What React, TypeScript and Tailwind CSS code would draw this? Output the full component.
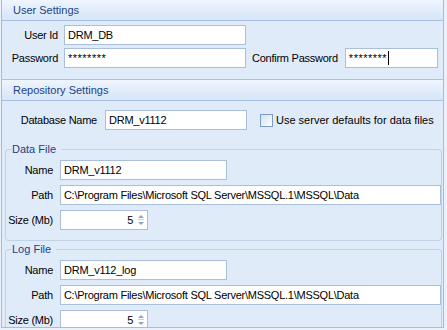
import React from "react";

const inputCls =
  "h-[20px] bg-white border border-[#a9bfdc] px-[3px] flex items-center text-[11px] text-black whitespace-nowrap overflow-hidden";

function Header({ title, top }: { title: string; top?: boolean }) {
  return (
    <div
      className={
        "h-[21px] bg-gradient-to-b from-[#eef5fe] to-[#d6e5f8] border-b border-[#aac2df] pl-[11px] flex items-center text-[11px] tracking-[0px] text-[#1d4185] " +
        (top ? "border-t border-t-[#aac2df] h-[22px]" : "")
      }
    >
      {title}
    </div>
  );
}

function Spin({ value }: { value: string }) {
  return (
    <div className={inputCls + " w-[88px] justify-end pr-[2px]"}>
      <span className="mr-[4px]">{value}</span>
      <svg width="8" height="16" viewBox="0 0 8 16">
        <path d="M1 6 L4 3 L7 6 Z" fill="#8ea5c4" />
        <rect x="1" y="7" width="6" height="1" fill="#c0cfe2" />
        <path d="M1 10 L4 13 L7 10 Z" fill="#8ea5c4" />
      </svg>
    </div>
  );
}

function Group({
  title,
  name,
  path,
  size,
  className,
}: {
  title: string;
  name: string;
  path: string;
  size: string;
  className?: string;
}) {
  return (
    <div className={"ml-[3px] mr-[1px] " + (className ?? "")}>
      <div className="flex h-[14px]">
        <div className="w-[6px] h-[7px] self-end border-t border-l border-[#c2d2e6] rounded-tl-[4px]" />
        <span className="px-[1px] text-[11px] tracking-[0px] leading-[14px] text-[#1d4185]">{title}</span>
        <div className="flex-1 h-[7px] self-end ml-[4px] border-t border-r border-[#c2d2e6] rounded-tr-[4px]" />
      </div>
      <div className="border-l border-r border-b border-[#c2d2e6] rounded-b-[4px] pt-[4px] pb-[10px] flex flex-col gap-[5px]">
        <div className="flex items-center">
          <span className="w-[47px] text-right">Name</span>
          <div className={inputCls + " ml-[7px] w-[167px]"}>{name}</div>
        </div>
        <div className="flex items-center">
          <span className="w-[47px] text-right">Path</span>
          <div className={inputCls + " ml-[7px] w-[382px]"}>{path}</div>
        </div>
        <div className="flex items-center">
          <span className="w-[47px] text-right whitespace-nowrap">Size (Mb)</span>
          <div className="ml-[7px]">
            <Spin value={size} />
          </div>
        </div>
      </div>
    </div>
  );
}

export default function App() {
  const path = "C:\\Program Files\\Microsoft SQL Server\\MSSQL.1\\MSSQL\\Data";
  return (
    <div className="w-[447px] h-[330px] bg-[#eaf1fa] overflow-hidden font-['Liberation_Sans',Arial,sans-serif] text-[11px] tracking-[-0.25px] text-black">
      <div className="ml-[1px] w-[443px] h-[328px] bg-[#e0ebfa] border-l border-r border-b border-[#a8bcd6] overflow-hidden">
        <Header title="User Settings" />
        <div className="h-[58px] pt-[4px] flex flex-col gap-[3px]">
          <div className="flex items-center">
            <span className="w-[56px] text-right">User Id</span>
            <div className={inputCls + " ml-[6px] w-[182px]"}>DRM_DB</div>
          </div>
          <div className="flex items-center">
            <span className="w-[56px] text-right">Password</span>
            <div className={inputCls + " ml-[6px] w-[182px] tracking-[0.5px]"}>********</div>
            <span className="ml-[6px] whitespace-nowrap">Confirm Password</span>
            <div className={inputCls + " ml-[7px] w-[93px] tracking-[0.5px]"}>
              ********
              <span className="inline-block w-px h-[14px] bg-black ml-[1px]" />
            </div>
          </div>
        </div>
        <Header title="Repository Settings" top />
        <div className="flex items-center mt-[9px] h-[20px]">
          <span className="w-[95px] text-right whitespace-nowrap">Database Name</span>
          <div className={inputCls + " ml-[8px] w-[142px]"}>DRM_v1112</div>
          <div className="ml-[13px] w-[13px] h-[13px] border border-[#7f9dc4] bg-gradient-to-br from-[#d3e0f1] to-[#ffffff]" />
          <span className="ml-[3px] whitespace-nowrap tracking-[0px]">Use server defaults for data files</span>
        </div>
        <Group title="Data File" name="DRM_v1112" path={path} size="5" className="mt-[12px]" />
        <Group title="Log File" name="DRM_v112_log" path={path} size="5" className="mt-[1px]" />
      </div>
    </div>
  );
}
